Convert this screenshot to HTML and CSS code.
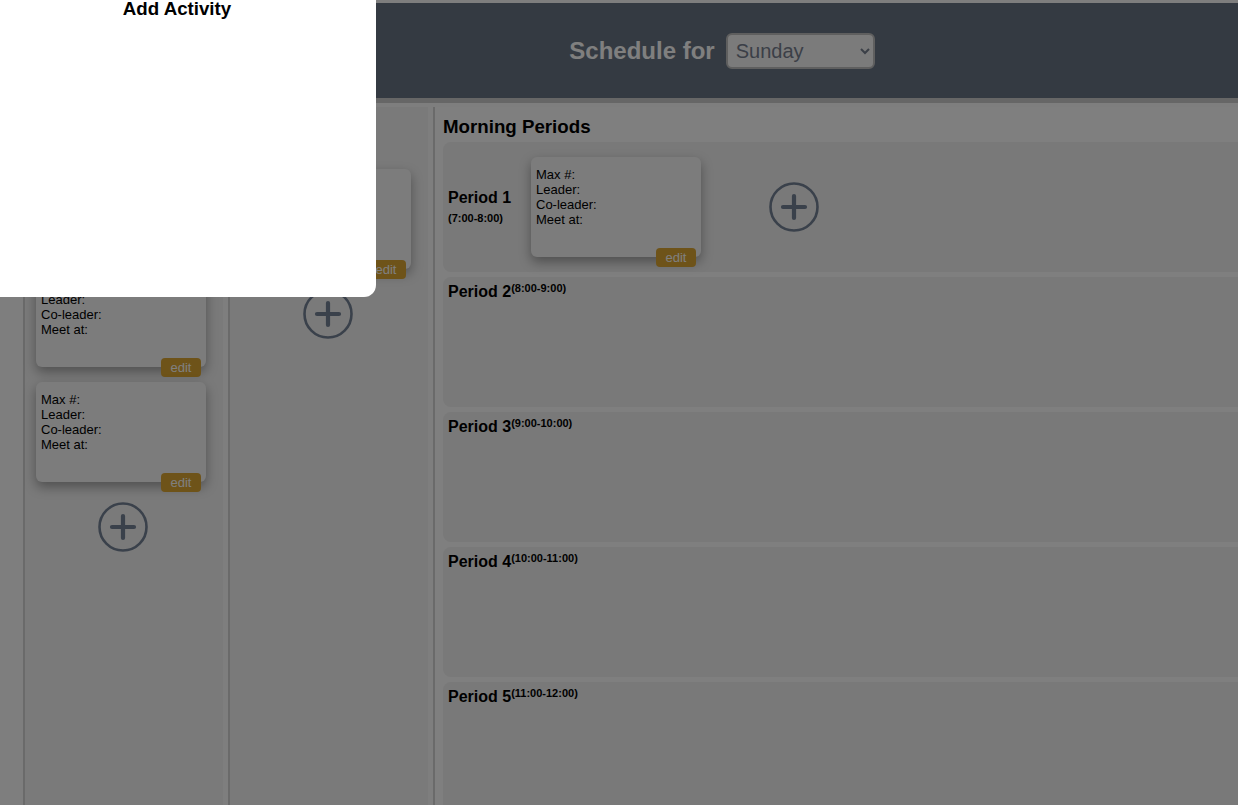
FILE: index.html
```html
<!DOCTYPE html>
<html lang="en">
<head>
<meta charset="utf-8">
<title>Schedule</title>
<link rel="stylesheet" href="styles.css">
</head>
<body>
<header class="topbar">
  <div class="brand">Activity Planner</div>
  <div class="day-picker">
    <label class="day-label" for="day">Schedule for</label>
    <select id="day" class="day-select">
      <option>Sunday</option>
      <option>Monday</option>
      <option>Tuesday</option>
    </select>
  </div>
</header>

<main class="board">
  <section class="pool pool-a">
    <h3 class="pool-title">Activities</h3>
    <div class="card"><div>Max #:</div><div>Leader:</div><div>Co-leader:</div><div>Meet at:</div><button class="edit">edit</button></div>
    <div class="card"><div>Max #:</div><div>Leader:</div><div>Co-leader:</div><div>Meet at:</div><button class="edit">edit</button></div>
    <div class="card"><div>Max #:</div><div>Leader:</div><div>Co-leader:</div><div>Meet at:</div><button class="edit">edit</button></div>
    <div class="add-slot"><svg class="plus" viewBox="0 0 52 52"><circle cx="26" cy="26" r="23.5"/><path d="M26 15v22M15 26h22"/></svg></div>
  </section>

  <section class="pool pool-b">
    <h3 class="pool-title">Staff</h3>
    <p class="pool-note">Unassigned</p>
    <div class="card"><div>Max #:</div><div>Leader:</div><div>Co-leader:</div><div>Meet at:</div><button class="edit">edit</button></div>
    <div class="add-slot"><svg class="plus" viewBox="0 0 52 52"><circle cx="26" cy="26" r="23.5"/><path d="M26 15v22M15 26h22"/></svg></div>
  </section>

  <section class="periods">
    <h2 class="periods-title">Morning Periods</h2>
    <div class="period period-filled">
      <div class="period-label">Period 1<span class="time">(7:00-8:00)</span></div>
      <div class="card"><div>Max #:</div><div>Leader:</div><div>Co-leader:</div><div>Meet at:</div><button class="edit">edit</button></div>
      <div class="add-slot"><svg class="plus" viewBox="0 0 52 52"><circle cx="26" cy="26" r="23.5"/><path d="M26 15v22M15 26h22"/></svg></div>
    </div>
    <div class="period">
      <div class="period-label">Period 2<span class="time">(8:00-9:00)</span></div>
    </div>
    <div class="period">
      <div class="period-label">Period 3<span class="time">(9:00-10:00)</span></div>
    </div>
    <div class="period">
      <div class="period-label">Period 4<span class="time">(10:00-11:00)</span></div>
    </div>
    <div class="period">
      <div class="period-label">Period 5<span class="time">(11:00-12:00)</span></div>
    </div>
  </section>
</main>

<div class="backdrop"></div>
<div class="modal" role="dialog">
  <h2 class="modal-title">Add Activity</h2>
</div>
</body>
</html>
```

FILE: styles.css
```css
* { box-sizing: border-box; }

html, body {
  margin: 0;
  height: 100%;
  overflow: hidden;
}

body {
  font-family: "Liberation Sans", Arial, Helvetica, sans-serif;
  background: #fdfdfd;
  color: #000;
  padding-top: 3px;
}

.topbar {
  display: flex;
  align-items: center;
  height: 100px;
  background: #687484;
  border-bottom: 5px solid #cccccc;
}

.brand {
  width: 206px;
  padding-left: 20px;
  color: #fff;
  font-weight: bold;
  font-size: 20px;
}

.day-picker {
  flex: 1;
  display: flex;
  justify-content: center;
  align-items: center;
  gap: 11px;
}

.day-label {
  color: #fff;
  font-weight: bold;
  font-size: 24px;
}

.day-select {
  width: 149px;
  height: 36px;
  font-family: "Liberation Sans", Arial, sans-serif;
  font-size: 20px;
  color: #767f8f;
  background: #f6f6f6;
  border: 2px solid #bebebe;
  border-radius: 6px;
  padding: 0 4px;
}

.board {
  display: flex;
  align-items: stretch;
  height: 720px;
  padding: 4px 0 0 23px;
  overflow: hidden;
}

.pool {
  flex: none;
  width: 200px;
  margin-right: 5px;
  background: #f4f4f4;
  border-left: 2px solid #d4d4d4;
  padding: 8px 16px 0 11px;
  display: flex;
  flex-direction: column;
  gap: 15px;
}

.pool-title {
  margin: 0 0 1px;
  font-size: 18px;
  line-height: 21px;
}

.pool-note {
  margin: -15px 0 1px;
  font-size: 12px;
  line-height: 16px;
}

.card {
  position: relative;
  flex: none;
  width: 170px;
  height: 100px;
  padding: 10px 5px;
  background: #f8f8f8;
  border-radius: 6px;
  box-shadow: 0 5px 12px rgba(0, 0, 0, 0.35);
  font-size: 13px;
  line-height: 15px;
}

.edit {
  position: absolute;
  right: 5px;
  bottom: -10px;
  width: 40px;
  height: 19px;
  padding: 0;
  border: none;
  border-radius: 4px;
  background: #dca632;
  color: #fff;
  font-family: "Liberation Sans", Arial, sans-serif;
  font-size: 13px;
}

.add-slot {
  flex: none;
  width: 170px;
  display: flex;
  justify-content: center;
  margin-top: 4px;
}

.pool .add-slot { margin-left: 2px; }

.plus {
  width: 52px;
  height: 52px;
  fill: none;
  stroke: #748296;
}

.plus circle { stroke-width: 2.6; }
.plus path { stroke-width: 4.2; stroke-linecap: round; }

.periods {
  flex: none;
  width: 840px;
  border-left: 2px solid #d4d4d4;
  padding: 9px 0 0 8px;
  background: #fefefe;
}

.periods-title {
  margin: 0 0 5px;
  font-size: 18.72px;
  line-height: 21px;
}

.period {
  display: flex;
  align-items: flex-start;
  gap: 8px;
  min-height: 130px;
  margin-bottom: 5px;
  padding: 1.5px 5px 5px;
  background: #f2f2f2;
  border-radius: 8px;
}

.period-filled {
  align-items: center;
  padding-top: 5px;
}

.period-label {
  font-size: 16px;
  font-weight: bold;
  line-height: 18px;
}

.time {
  font-size: 11px;
  vertical-align: 5px;
}

.period-filled .period-label { width: 75px; }

.period-filled .time {
  display: block;
  margin-top: 5px;
  line-height: 13px;
  vertical-align: baseline;
}

.period-filled .add-slot { margin-top: 0; }

.backdrop {
  position: fixed;
  inset: 0;
  background: rgba(0, 0, 0, 0.5);
}

.modal {
  position: fixed;
  left: -22px;
  top: -12px;
  width: 398px;
  height: 309px;
  background: #fff;
  border-radius: 12px;
  padding-top: 12px;
}

.modal-title {
  margin: 0;
  text-align: center;
  font-size: 18.72px;
  line-height: 18px;
}
```
